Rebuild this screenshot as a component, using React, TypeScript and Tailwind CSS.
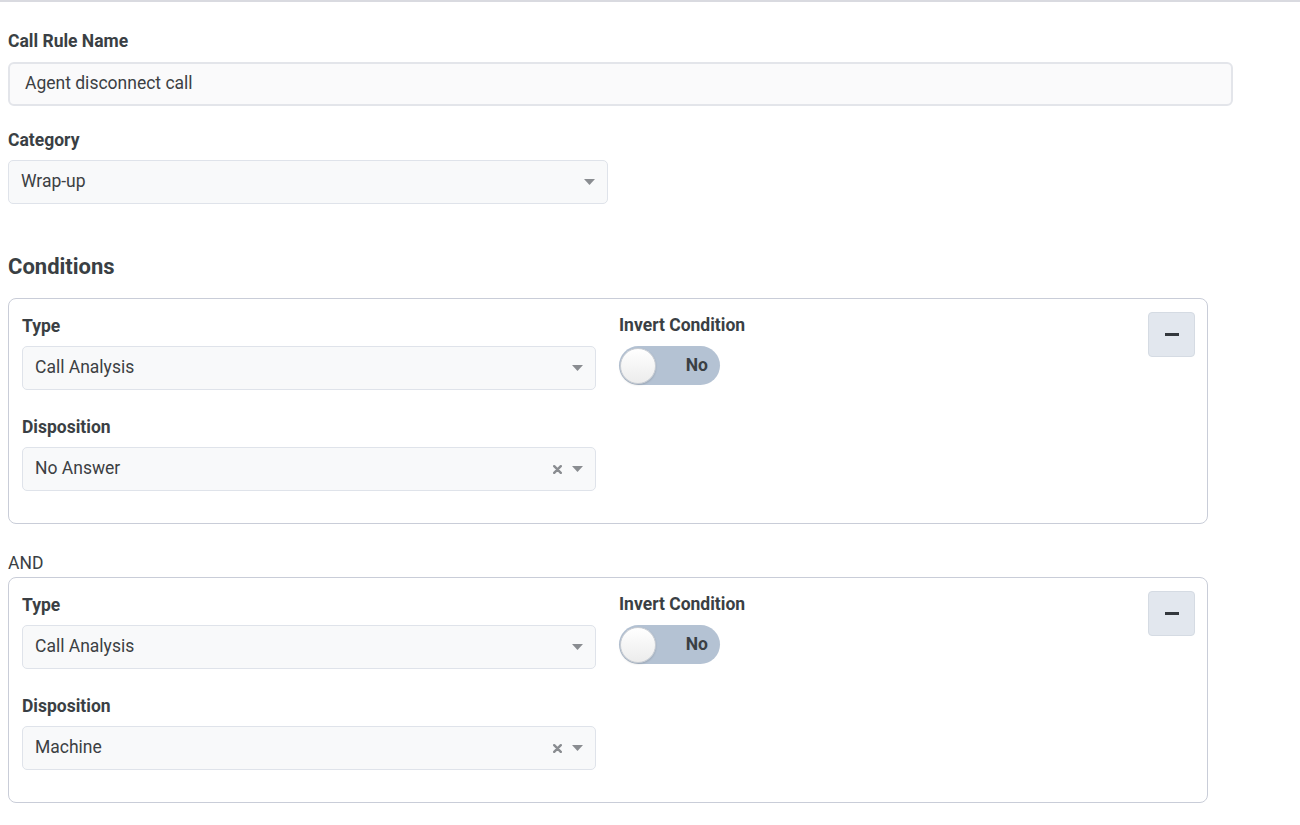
import React from "react";

// Small caret used by the select-like fields
function Caret() {
  return (
    <svg width="11" height="6" viewBox="0 0 11 6" className="shrink-0">
      <path d="M0 0 L11 0 L5.5 6 Z" fill="#8a8d91" />
    </svg>
  );
}

function ClearX() {
  return (
    <svg width="9" height="9" viewBox="0 0 9 9" className="shrink-0">
      <path d="M1.2 1.2 L7.8 7.8 M7.8 1.2 L1.2 7.8" stroke="#8a8d91" strokeWidth="2.4" strokeLinecap="round" />
    </svg>
  );
}

function Label({ children }: { children: React.ReactNode }) {
  return <div className="text-[17.5px] leading-[20px] font-bold text-[#3a3f44]">{children}</div>;
}

function SelectBox({
  value,
  clearable = false,
  className = "",
}: {
  value: string;
  clearable?: boolean;
  className?: string;
}) {
  return (
    <div
      className={`h-[44px] flex items-center justify-between pl-[12px] pr-[12px] rounded-[5px] border border-[#dfe3ea] bg-[#f8f9fa] ${className}`}
    >
      <span className="text-[17.5px] leading-[20px] text-[#3c4043] -mt-[2px]">{value}</span>
      <div className="flex items-center gap-[10px]">
        {clearable && <ClearX />}
        <Caret />
      </div>
    </div>
  );
}

function Toggle() {
  return (
    <div className="w-[101px] h-[39px] rounded-full bg-[#b4c2d3] flex items-center justify-between pl-[1px] pr-[12px]">
      <div className="w-[36px] h-[36px] rounded-full bg-gradient-to-b from-white to-[#ececec] border border-[#c9cdd3] shadow-[0_1px_2px_rgba(0,0,0,0.15)]" />
      <span className="text-[17.5px] font-bold text-[#3a3f44]">No</span>
    </div>
  );
}

function ConditionCard({ disposition }: { disposition: string }) {
  return (
    <div className="w-[1200px] h-[226px] rounded-[8px] border border-[#c9cdd8] pl-[13px] pr-[12px] pt-[17px] flex">
      <div className="w-[574px] flex flex-col">
        <Label>Type</Label>
        <SelectBox value="Call Analysis" className="mt-[10px]" />
        <div className="mt-[27px]">
          <Label>Disposition</Label>
        </div>
        <SelectBox value={disposition} clearable className="mt-[10px]" />
      </div>
      <div className="ml-[23px] flex flex-col">
        <div className="-mt-[1px]">
          <Label>Invert Condition</Label>
        </div>
        <div className="mt-[11px]">
          <Toggle />
        </div>
      </div>
      <div className="ml-auto -mt-[4px]">
        <button className="w-[47px] h-[45px] rounded-[4px] bg-[#e2e7ee] border border-[#d5dbe3] flex items-center justify-center">
          <span className="block w-[14px] h-[3px] bg-[#33383d]" />
        </button>
      </div>
    </div>
  );
}

export default function App() {
  return (
    <div
      className="w-[1300px] h-[825px] bg-white border-t-2 border-[#d9dae0] overflow-hidden"
      style={{ fontFamily: "Roboto, 'Liberation Sans', sans-serif" }}
    >
      <div className="pl-[8px] pt-[29px]">
        <Label>Call Rule Name</Label>
        <div className="mt-[11px] w-[1225px] h-[44px] rounded-[6px] border-2 border-[#e3e5ea] bg-[#fafafb] flex items-center pl-[15px] text-[17.5px] leading-[20px] text-[#3c4043]">
          <span className="-mt-[2px]">Agent disconnect call</span>
        </div>

        <div className="mt-[24px]">
          <Label>Category</Label>
        </div>
        <SelectBox value="Wrap-up" className="mt-[10px] w-[600px]" />

        <div className="mt-[49px] text-[22px] leading-[28px] font-bold text-[#3a3f44]">Conditions</div>

        <div className="mt-[17px]">
          <ConditionCard disposition="No Answer" />
        </div>

        <div className="mt-[29px] text-[17.5px] leading-[20px] text-[#3a3f44]">AND</div>

        <div className="mt-[4px]">
          <ConditionCard disposition="Machine" />
        </div>
      </div>
    </div>
  );
}
